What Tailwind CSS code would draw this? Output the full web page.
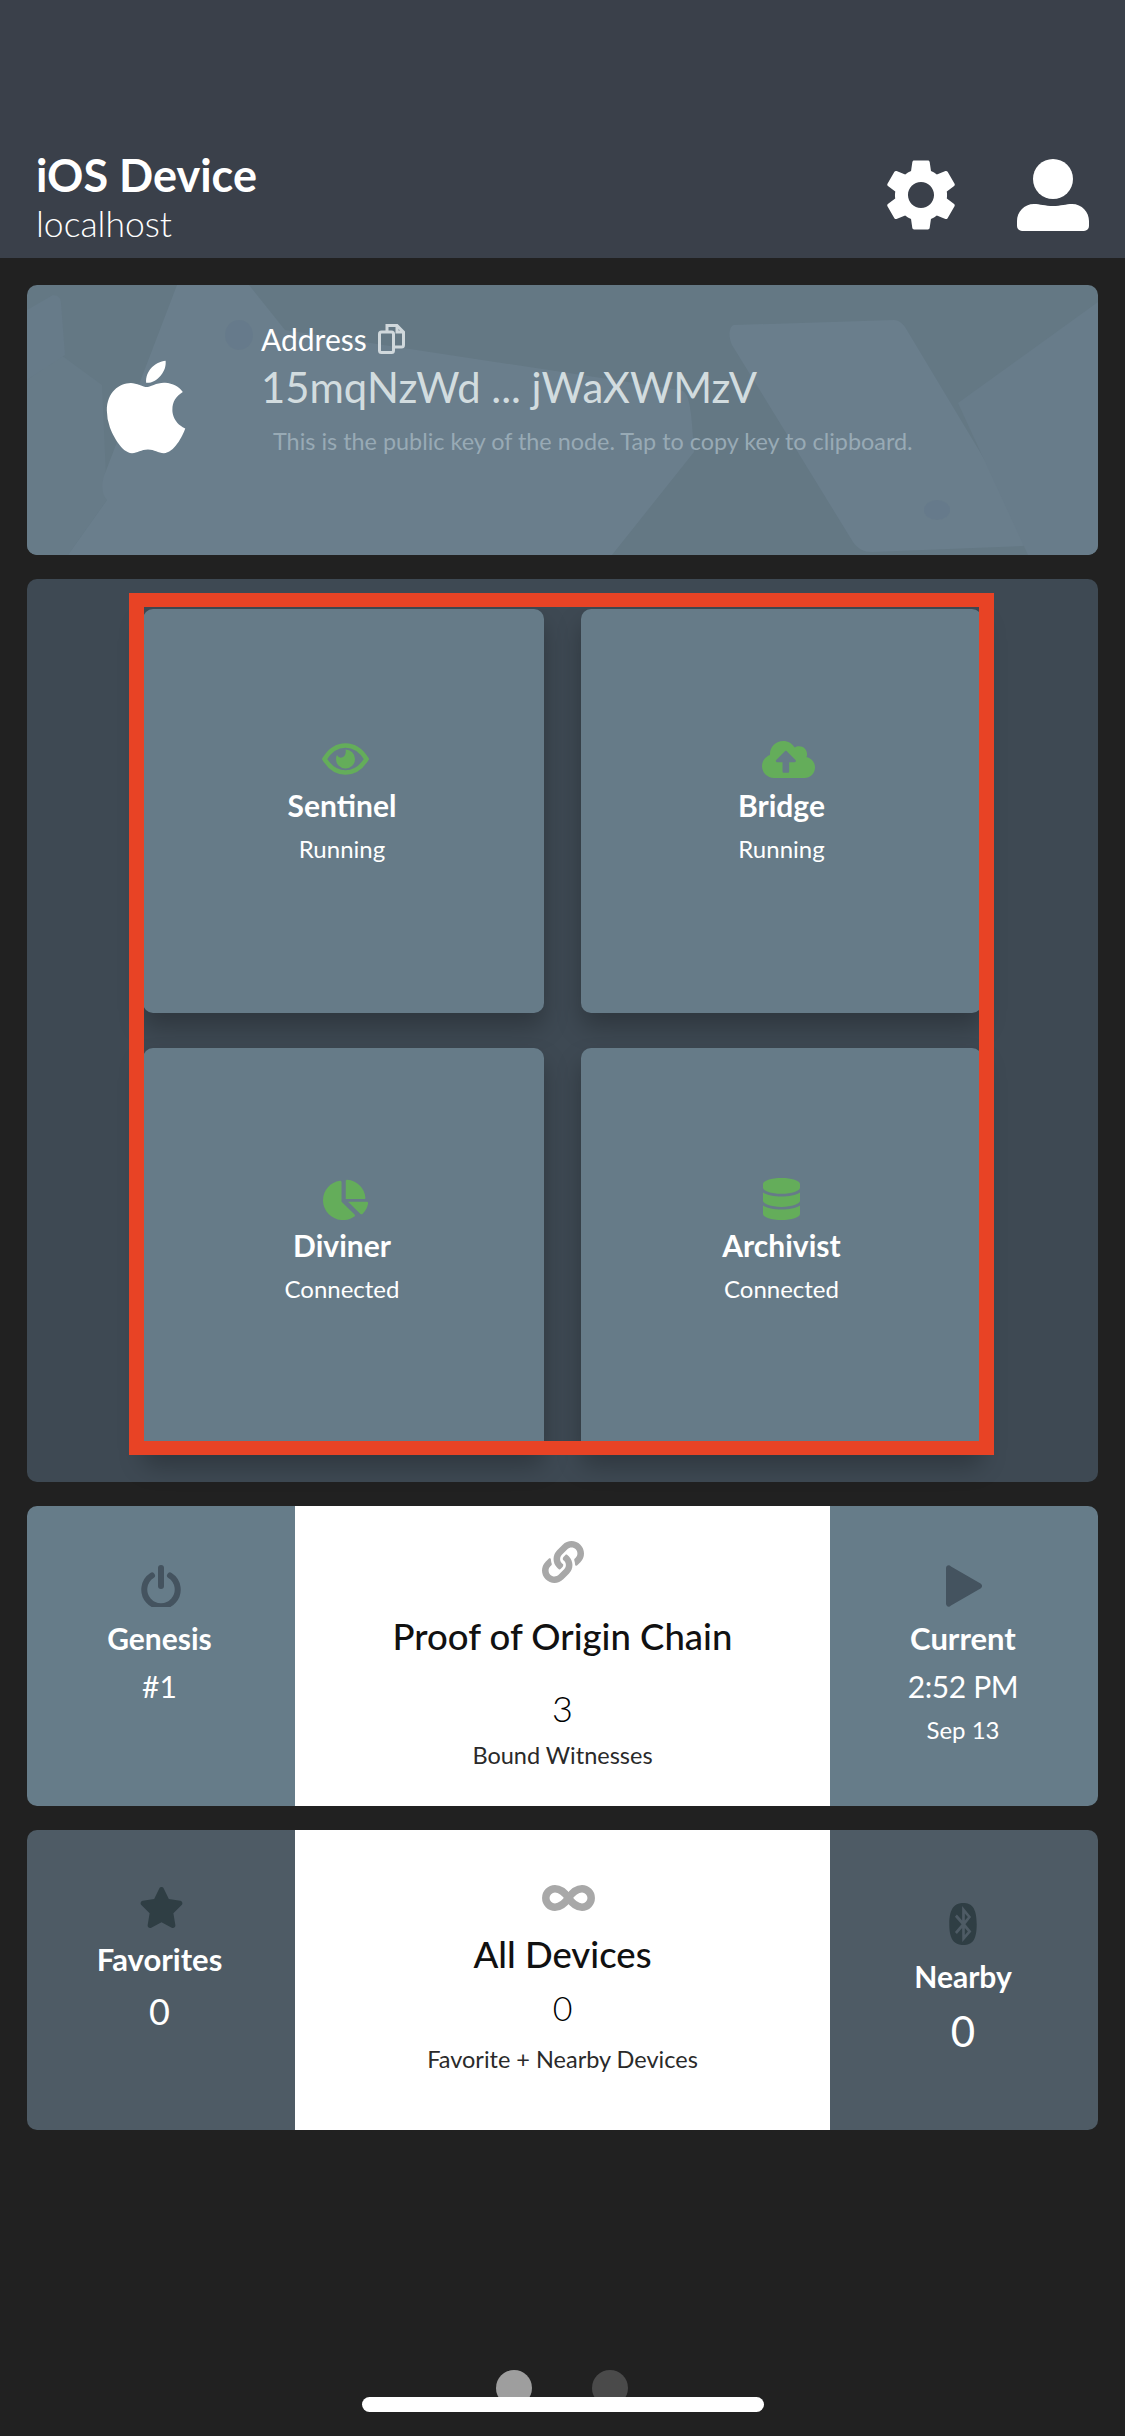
<!DOCTYPE html>
<html lang="en">
<head>
    <meta charset="UTF-8">
    <meta name="viewport" content="width=device-width, initial-scale=1.0">
    <title>iOS Device</title>
    <script src="https://cdn.jsdelivr.net/npm/@tailwindcss/browser@4"></script>
</head>
<body class="bg-[#212121] font-[Lato,sans-serif] text-white">
    <div class="relative h-[2436px] w-[1125px] overflow-hidden">

        <!-- Header -->
        <header class="flex h-[258px] items-end justify-between bg-[#3a404a] pb-[13px] pl-[36px] pr-[36px]">
            <div>
                <h1 class="mb-[1px] text-[45px] leading-[53px] font-bold">iOS Device</h1>
                <p class="text-[35.500px] leading-[42px] font-light">localhost</p>
            </div>
            <div class="mb-[14px] flex items-center gap-[62px]">
                <svg class="h-[72px] w-[68px]" viewBox="2.6 2 18.8 20" preserveAspectRatio="none" fill="#fff"><path d="M19.14 12.94c.04-.3.06-.61.06-.94 0-.32-.02-.64-.07-.94l2.03-1.58c.18-.14.23-.41.12-.61l-1.92-3.32c-.12-.22-.37-.29-.59-.22l-2.39.96c-.5-.38-1.03-.7-1.62-.94l-.36-2.54c-.04-.24-.24-.41-.48-.41h-3.84c-.24 0-.43.17-.47.41l-.36 2.54c-.59.24-1.13.57-1.62.94l-2.39-.96c-.22-.08-.47 0-.59.22L2.74 8.87c-.12.21-.08.47.12.61l2.03 1.58c-.05.3-.09.63-.09.94s.02.64.07.94l-2.03 1.58c-.18.14-.23.41-.12.61l1.92 3.32c.12.22.37.29.59.22l2.39-.96c.5.38 1.03.7 1.62.94l.36 2.54c.05.24.24.41.48.41h3.84c.24 0 .44-.17.47-.41l.36-2.54c.59-.24 1.13-.56 1.62-.94l2.39.96c.22.08.47 0 .59-.22l1.92-3.32c.12-.22.07-.47-.12-.61l-2.01-1.58zM12 15.6c-1.98 0-3.6-1.62-3.6-3.6s1.62-3.6 3.6-3.6 3.6 1.62 3.6 3.6-1.62 3.6-3.6 3.6z"/></svg>
                <svg class="h-[72px] w-[72px]" viewBox="0 0 72 72" fill="#fff"><circle cx="36" cy="20" r="20"/><path d="M17 45c6 0 11 2 19 2s13-2 19-2c10 0 17 8 17 17v5a5 5 0 0 1-5 5H5a5 5 0 0 1-5-5v-5c0-9 7-17 17-17z"/></svg>
            </div>
        </header>

        <main class="flex flex-col px-[27px]">

            <!-- Address card -->
            <section class="relative mt-[27px] flex h-[270px] overflow-hidden rounded-[10px] bg-[#647884]">
                <svg class="absolute inset-0 h-full w-full" viewBox="0 0 1071 270" fill="#6a7e8c">
                    <path d="M0 95l34-25 41 30 5 115-39 55H0z" fill="#677b88"/>
                    <path d="M0 25l26-15c5 0 8 3 8 8l4 52-38 25z" fill="#677b89"/>
                    <path d="M150 0h72l36 45 395 60c8 2 11 8 14 62l-82 103H41l39-55c-5-6-6-14-3-24z"/>
                    <path d="M707 40l160-5c5 0 10 4 14 12l120 200c4 8 2 13-6 14l-150 6c-8 0-14-3-19-10L705 60c-4-8-3-19 2-20z" fill="#6a7e8c"/>
                    <path d="M1071 17L931 118l70 152h70z" fill="#687c8a"/>
                    <ellipse cx="910" cy="225" rx="13" ry="10" fill="#64788a" fill-opacity=".6"/>
                    <ellipse cx="212" cy="50" rx="14" ry="15" fill="#64788a" fill-opacity=".6"/>
                </svg>
                <div class="relative flex w-[234px] shrink-0 items-start justify-center pl-[4px] pt-[74px]">
                    <svg class="h-[95px] w-[80px]" viewBox="0 24 384 460" preserveAspectRatio="none" fill="#fff"><path d="M318.7 268.7c-.2-36.7 16.4-64.4 50-84.8-18.8-26.9-47.2-41.7-84.7-44.6-35.5-2.8-74.3 20.7-88.5 20.7-15 0-49.4-19.7-76.4-19.7C63.3 141.2 4 184.8 4 273.5q0 39.3 14.4 81.2c12.8 36.7 59 126.7 107.2 125.2 25.2-.6 43-17.9 75.8-17.9 31.8 0 48.3 17.9 76.4 17.9 48.6-.7 90.4-82.5 102.6-119.3-65.2-30.7-61.7-90-61.7-91.9zm-56.6-164.2c27.3-32.4 24.8-61.9 24-72.5-24.1 1.4-52 16.4-67.9 34.9-17.5 19.8-27.8 44.3-25.6 71.9 26.1 2 49.9-11.4 69.5-34.3z"/></svg>
                </div>
                <div class="relative pt-[36px]">
                    <div class="flex items-center gap-[11px]">
                        <span class="text-[30px] leading-[36px]">Address</span>
                        <svg class="h-[30px] w-[27px]" viewBox="0 0 27 30" fill="none" stroke="#d0d8dc" stroke-width="3"><rect x="1.500" y="8" width="14" height="20.500" rx="2"/><path d="M9 8V1.500h10l6.500 6.500v13a2 2 0 0 1-2 2h-8M19 1.500V8h6.500"/></svg>
                    </div>
                    <p class="mt-[5px] text-[41.800px] leading-[50px] text-[#d2dcdf]">15mqNzWd ... jWaXWMzV</p>
                    <p class="mt-[14px] pl-[12px] text-[23.400px] leading-[30px] text-[#98aab5]">This is the public key of the node. Tap to copy key to clipboard.</p>
                </div>
            </section>

            <!-- Modules -->
            <section class="relative mt-[24px] h-[903px] rounded-[10px] bg-[#3e4953] pl-[116px] pt-[30px]">
                <div class="grid grid-cols-[401px_401px] grid-rows-[404px_404px] gap-x-[37px] gap-y-[35px]">
                    <div class="flex flex-col items-center rounded-[10px] bg-[#667b88] pr-[3px] pt-[134px] shadow-[0_14px_24px_rgba(0,0,0,0.25)]">
                        <svg class="ml-[6px] h-[32px] w-[47px]" viewBox="0 0 47 32"><path d="M2.500 16C8 7 15 2.500 23.500 2.500S39 7 44.500 16C39 25 32 29.500 23.500 29.500S8 25 2.500 16z" fill="none" stroke="#64ad5a" stroke-width="4.500"/><path d="M23.500 6.500a9.500 9.500 0 1 1-9.500 9.500c0-1.500.3-2.900 1-4 1 2 3 3 5 2.500 2.800-.8 4.500-4 3.500-8z" fill="#64ad5a"/></svg>
                        <h2 class="mt-[12px] text-[30px] leading-[36px] font-bold">Sentinel</h2>
                        <p class="mt-[11px] text-[24px] leading-[30px]">Running</p>
                    </div>
                    <div class="flex flex-col items-center rounded-[10px] bg-[#667b88] pt-[132px] shadow-[0_14px_24px_rgba(0,0,0,0.25)]">
                        <svg class="ml-[14px] h-[37px] w-[53px]" viewBox="0 32 640 448" preserveAspectRatio="none" fill="#64ad5a"><path d="M537.6 226.6c4.1-10.7 6.4-22.4 6.4-34.6 0-53-43-96-96-96-19.7 0-38.1 6-53.3 16.2C367 64.2 315.3 32 256 32c-88.4 0-160 71.6-160 160 0 2.7.1 5.4.2 8.1C40.2 219.8 0 273.2 0 336c0 79.5 64.5 144 144 144h368c70.7 0 128-57.300 128-128 0-61.900-44-113.600-102.400-125.400zM393.400 288H328v112c0 8.800-7.200 16-16 16h-48c-8.800 0-16-7.200-16-16V288h-65.400c-14.300 0-21.400-17.200-11.300-27.300l105.400-105.400c6.200-6.200 16.400-6.200 22.600 0l105.400 105.400c10.100 10.100 2.900 27.300-11.300 27.300z"/></svg>
                        <h2 class="mt-[9px] text-[30px] leading-[36px] font-bold">Bridge</h2>
                        <p class="mt-[11px] text-[24px] leading-[30px]">Running</p>
                    </div>
                    <div class="flex flex-col items-center rounded-[10px] bg-[#667b88] pr-[3px] pt-[130px] shadow-[0_14px_24px_rgba(0,0,0,0.25)]">
                        <svg class="ml-[6px] h-[42px] w-[45px]" viewBox="0 0 544 512" preserveAspectRatio="none" fill="#64ad5a"><path d="M527.800 288H303.300l149.800 149.800c6.500 6.500 17.200 7 23.900.7 36.700-34.600 61.900-81.200 69.300-133.600 1.300-9-6.200-16.900-15.300-16.900h-3.200zM513 241.500C505 122.500 410.500 28 291.500 20c-9.100-.6-16.500 7-16.500 16.100V256h222.900c9.100 0 15.700-5.400 15.100-14.500zM224 288V50.500c0-10.300-8.900-18.700-19.100-17.300C85.800 50-3.800 154.700.1 280c4.100 128.800 115.100 234.400 244 232.800 50.700-.6 97.500-17 136-44.400 8-5.700 8.500-17.400 1.600-24.300L224 288z"/></svg>
                        <h2 class="mt-[7px] text-[30px] leading-[36px] font-bold">Diviner</h2>
                        <p class="mt-[11px] text-[24px] leading-[30px]">Connected</p>
                    </div>
                    <div class="flex flex-col items-center rounded-[10px] bg-[#667b88] pt-[130px] shadow-[0_14px_24px_rgba(0,0,0,0.25)]">
                        <svg class="h-[42px] w-[37px]" viewBox="0 0 448 512" preserveAspectRatio="none" fill="#64ad5a"><path d="M448 73.143v45.714C448 159.143 347.667 192 224 192S0 159.143 0 118.857V73.143C0 32.857 100.333 0 224 0s224 32.857 224 73.143zM448 176v102.857C448 319.143 347.667 352 224 352S0 319.143 0 278.857V176c48.115 33.143 136.175 48.571 224 48.571S399.885 209.143 448 176zm0 160v102.857C448 479.143 347.667 512 224 512S0 479.143 0 438.857V336c48.115 33.143 136.175 48.571 224 48.571S399.885 369.143 448 336z"/></svg>
                        <h2 class="mt-[7px] text-[30px] leading-[36px] font-bold">Archivist</h2>
                        <p class="mt-[11px] text-[24px] leading-[30px]">Connected</p>
                    </div>
                </div>
                <!-- red outline drawn over the tiles -->
                <div class="pointer-events-none absolute left-[102px] top-[14px] h-[862px] w-[865px] border-x-[15px] border-y-[14px] border-[#e84325]"></div>
            </section>

            <!-- Proof of Origin Chain -->
            <section class="mt-[24px] grid h-[300px] grid-cols-[268px_535px_268px] overflow-hidden rounded-[10px] bg-[#667c89]">
                <div class="flex flex-col items-center pr-[3px] pt-[59px]">
                    <svg class="ml-[3px] h-[42px] w-[40px]" viewBox="0 0 40 42" fill="none" stroke="#44535f" stroke-width="6"><path d="M11 10.500a16.700 16.700 0 1 0 18 0" stroke-linecap="round"/><path d="M20 3v18" stroke-linecap="round"/></svg>
                    <h3 class="mt-[13px] text-[30px] leading-[36px] font-bold">Genesis</h3>
                    <p class="mt-[12px] text-[30px] leading-[36px]">#1</p>
                </div>
                <div class="flex flex-col items-center bg-white pt-[35px] text-[#111]">
                    <svg class="h-[42px] w-[42px]" viewBox="0 0 512 512" fill="#a8a8a8"><path d="M326.612 185.391c59.747 59.809 58.927 155.698.36 214.59-.11.12-.24.25-.36.37l-67.2 67.2c-59.27 59.27-155.699 59.262-214.96 0-59.27-59.26-59.27-155.7 0-214.96l37.106-37.106c9.84-9.84 26.786-3.3 27.294 10.606.648 17.722 3.826 35.527 9.69 52.721 1.986 5.822.567 12.262-3.783 16.612l-13.087 13.087c-28.026 28.026-28.905 73.66-1.155 101.96 28.024 28.579 74.086 28.749 102.325.51l67.2-67.19c28.191-28.191 28.073-73.757 0-101.83-3.701-3.694-7.429-6.564-10.341-8.569a16.037 16.037 0 0 1-6.947-12.606c-.396-10.567 3.348-21.456 11.698-29.806l21.054-21.055c5.521-5.521 14.182-6.199 20.584-1.731a152.482 152.482 0 0 1 20.522 17.197zM467.547 44.449c-59.261-59.262-155.69-59.27-214.96 0l-67.2 67.2c-.12.12-.25.25-.36.37-58.566 58.892-59.387 154.781.36 214.59a152.454 152.454 0 0 0 20.521 17.196c6.402 4.468 15.064 3.789 20.584-1.731l21.054-21.055c8.35-8.35 12.094-19.239 11.698-29.806a16.037 16.037 0 0 0-6.947-12.606c-2.912-2.005-6.64-4.875-10.341-8.569-28.073-28.073-28.191-73.639 0-101.83l67.2-67.19c28.239-28.239 74.3-28.069 102.325.51 27.75 28.3 26.872 73.934-1.155 101.96l-13.087 13.087c-4.35 4.35-5.769 10.79-3.783 16.612 5.864 17.194 9.042 34.999 9.69 52.721.509 13.906 17.454 20.446 27.294 10.606l37.106-37.106c59.271-59.259 59.271-155.699.001-214.959z"/></svg>
                    <h3 class="mt-[31px] text-[36.500px] leading-[44px] font-medium">Proof of Origin Chain</h3>
                    <p class="mt-[28px] text-[36px] leading-[44px] font-light text-black">3</p>
                    <p class="mt-[10px] text-[23.500px] leading-[30px] text-[#2a2a2a]">Bound Witnesses</p>
                </div>
                <div class="flex flex-col items-center pr-[2px] pt-[59px]">
                    <svg class="ml-[2px] h-[42px] w-[36px]" viewBox="0 0 36 42" fill="#44535f"><path d="M0 3.500C0 .5 3 -.8 5 1.500l29.500 17c2 1.300 2 3.700 0 5L5 40.500c-2 2.300-5 1-5-2z"/></svg>
                    <h3 class="mt-[13px] text-[31px] leading-[36px] font-bold">Current</h3>
                    <p class="mt-[12px] text-[30px] leading-[36px] tracking-[-0.4px]">2:52 PM</p>
                    <p class="mt-[11px] text-[24px] leading-[30px]">Sep 13</p>
                </div>
            </section>

            <!-- Devices -->
            <section class="mt-[24px] grid h-[300px] grid-cols-[268px_535px_268px] overflow-hidden rounded-[10px] bg-[#4e5b65]">
                <div class="flex flex-col items-center pr-[3px] pt-[57px]">
                    <svg class="ml-[3px] h-[41px] w-[45px]" viewBox="0 0 576 512" preserveAspectRatio="none" fill="#2f3e44"><path d="M259.3 17.800L194 150.200 47.900 171.500c-26.200 3.800-36.700 36.100-17.700 54.600l105.700 103-25 145.500c-4.500 26.300 23.200 46 46.400 33.700L288 439.600l130.700 68.700c23.200 12.200 50.900-7.400 46.400-33.700l-25-145.500 105.700-103c19-18.500 8.500-50.800-17.700-54.600L382 150.200 316.700 17.800c-11.700-23.600-45.600-24-57.400 0z"/></svg>
                    <h3 class="mt-[13px] text-[31px] leading-[36px] font-bold">Favorites</h3>
                    <p class="mt-[12px] text-[36px] leading-[44px]">0</p>
                </div>
                <div class="flex flex-col items-center bg-white pt-[55px] text-[#111]">
                    <svg class="ml-[11px] h-[26px] w-[53px]" viewBox="0 0 53 26" fill="none" stroke="#a8a8a8" stroke-width="7.500"><path d="M26.500 13C22 6.500 18.500 3.800 13 3.800a9.200 9.200 0 0 0 0 18.400c5.500 0 9-2.700 13.500-9.200S35 3.800 40 3.800a9.200 9.200 0 0 1 0 18.400c-5 0-9-2.700-13.500-9.200z"/></svg>
                    <h3 class="mt-[21px] text-[36.500px] leading-[44px] font-medium">All Devices</h3>
                    <p class="mt-[11px] text-[34px] leading-[42px] font-light text-black">0</p>
                    <p class="mt-[15px] text-[23.500px] leading-[30px] text-[#2a2a2a]">Favorite + Nearby Devices</p>
                </div>
                <div class="flex flex-col items-center pr-[2px] pt-[73px]">
                    <svg class="h-[42px] w-[32px]" viewBox="0 0 448 512" preserveAspectRatio="none" fill="#2f3e44"><path d="M292.600 171.100L249.700 214l-.3-86 43.200 43.100m-43.200 219.800l43.100-43.100-42.900-42.900-.2 86zM416 259.400C416 465 344.100 512 230.900 512S32 465 32 259.400 115.400 0 228.600 0 416 53.900 416 259.400zm-158.500 0l79.400-88.600L211.800 36.500v176.900L138 139.600l-27 26.900 92.700 93-92.700 93 26.900 26.900 73.800-73.800 2.300 170 127.400-127.500-83.400-88.700z"/></svg>
                    <h3 class="mt-[13px] text-[30px] leading-[36px] font-bold">Nearby</h3>
                    <p class="mt-[12px] text-[42px] leading-[50px]">0</p>
                </div>
            </section>
        </main>

        <!-- Page dots and home indicator -->
        <div class="absolute left-[496px] top-[2370px] flex gap-[60px]">
            <span class="h-[36px] w-[36px] rounded-full bg-[#9e9e9e]"></span>
            <span class="h-[36px] w-[36px] rounded-full bg-[#4a4a4a]"></span>
        </div>
        <div class="absolute left-[362px] top-[2397px] h-[15px] w-[402px] rounded-full bg-white"></div>
    </div>
</body>
</html>
